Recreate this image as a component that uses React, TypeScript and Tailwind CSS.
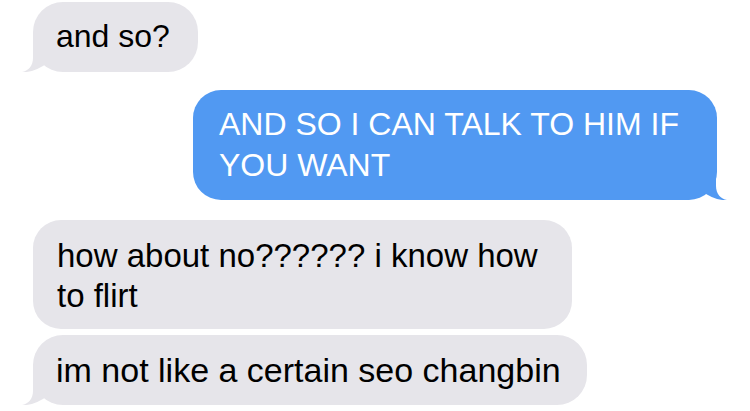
import React from "react";

function LeftTail({ color }: { color: string }) {
  return (
    <svg
      className="absolute left-[-11px] bottom-[-1px]"
      width="26"
      height="37"
      viewBox="0 0 26 37"
      style={{ overflow: "visible" }}
    >
      <path d="M11,0 L11,22 C11,30 6,35 0,36 C8,36.5 15,34 24,28 L24,0 Z" fill={color} />
    </svg>
  );
}

function RightTail({ color }: { color: string }) {
  return (
    <svg
      className="absolute right-[-10px] bottom-[-1px]"
      width="26"
      height="37"
      viewBox="0 0 26 37"
      style={{ overflow: "visible" }}
    >
      <path d="M15,0 L15,22 C15,30 20,35 26,36 C18,36.5 11,34 2,28 L2,0 Z" fill={color} />
    </svg>
  );
}

export default function App() {
  return (
    <div className="w-[750px] h-[411px] bg-white overflow-hidden font-['Liberation_Sans',Arial,sans-serif] flex flex-col">
      <div className="relative ml-[33px] mt-[2px] w-[165px] rounded-[30px] bg-[#e6e5ea] pl-[23px] pr-[20px] pt-[14px] pb-[16px] text-[32px] leading-[40px] text-black whitespace-nowrap">
        <LeftTail color="#e6e5ea" />
        <span className="relative">and so?</span>
      </div>

      <div className="relative self-end mr-[33px] mt-[18px] w-[524px] rounded-[28px] bg-[#5199f2] pl-[26px] pr-[20px] pt-[14px] pb-[14px] text-[32px] leading-[41px] text-white whitespace-nowrap">
        <RightTail color="#5199f2" />
        <span className="relative">
          AND SO I CAN TALK TO HIM IF
          <br />
          YOU WANT
        </span>
      </div>

      <div className="relative ml-[33px] mt-[20px] w-[539px] rounded-[28px] bg-[#e6e5ea] pl-[24px] pr-[20px] pt-[16px] pb-[13px] text-[33px] leading-[40px] text-black whitespace-nowrap">
        <span className="relative">
          how about no?????? i know how
          <br />
          to flirt
        </span>
      </div>

      <div className="relative ml-[33px] mt-[6px] w-[554px] rounded-[30px] bg-[#e6e5ea] pl-[23px] pr-[20px] pt-[15px] pb-[15px] text-[34px] leading-[40px] text-black whitespace-nowrap">
        <LeftTail color="#e6e5ea" />
        <span className="relative">im not like a certain seo changbin</span>
      </div>
    </div>
  );
}
